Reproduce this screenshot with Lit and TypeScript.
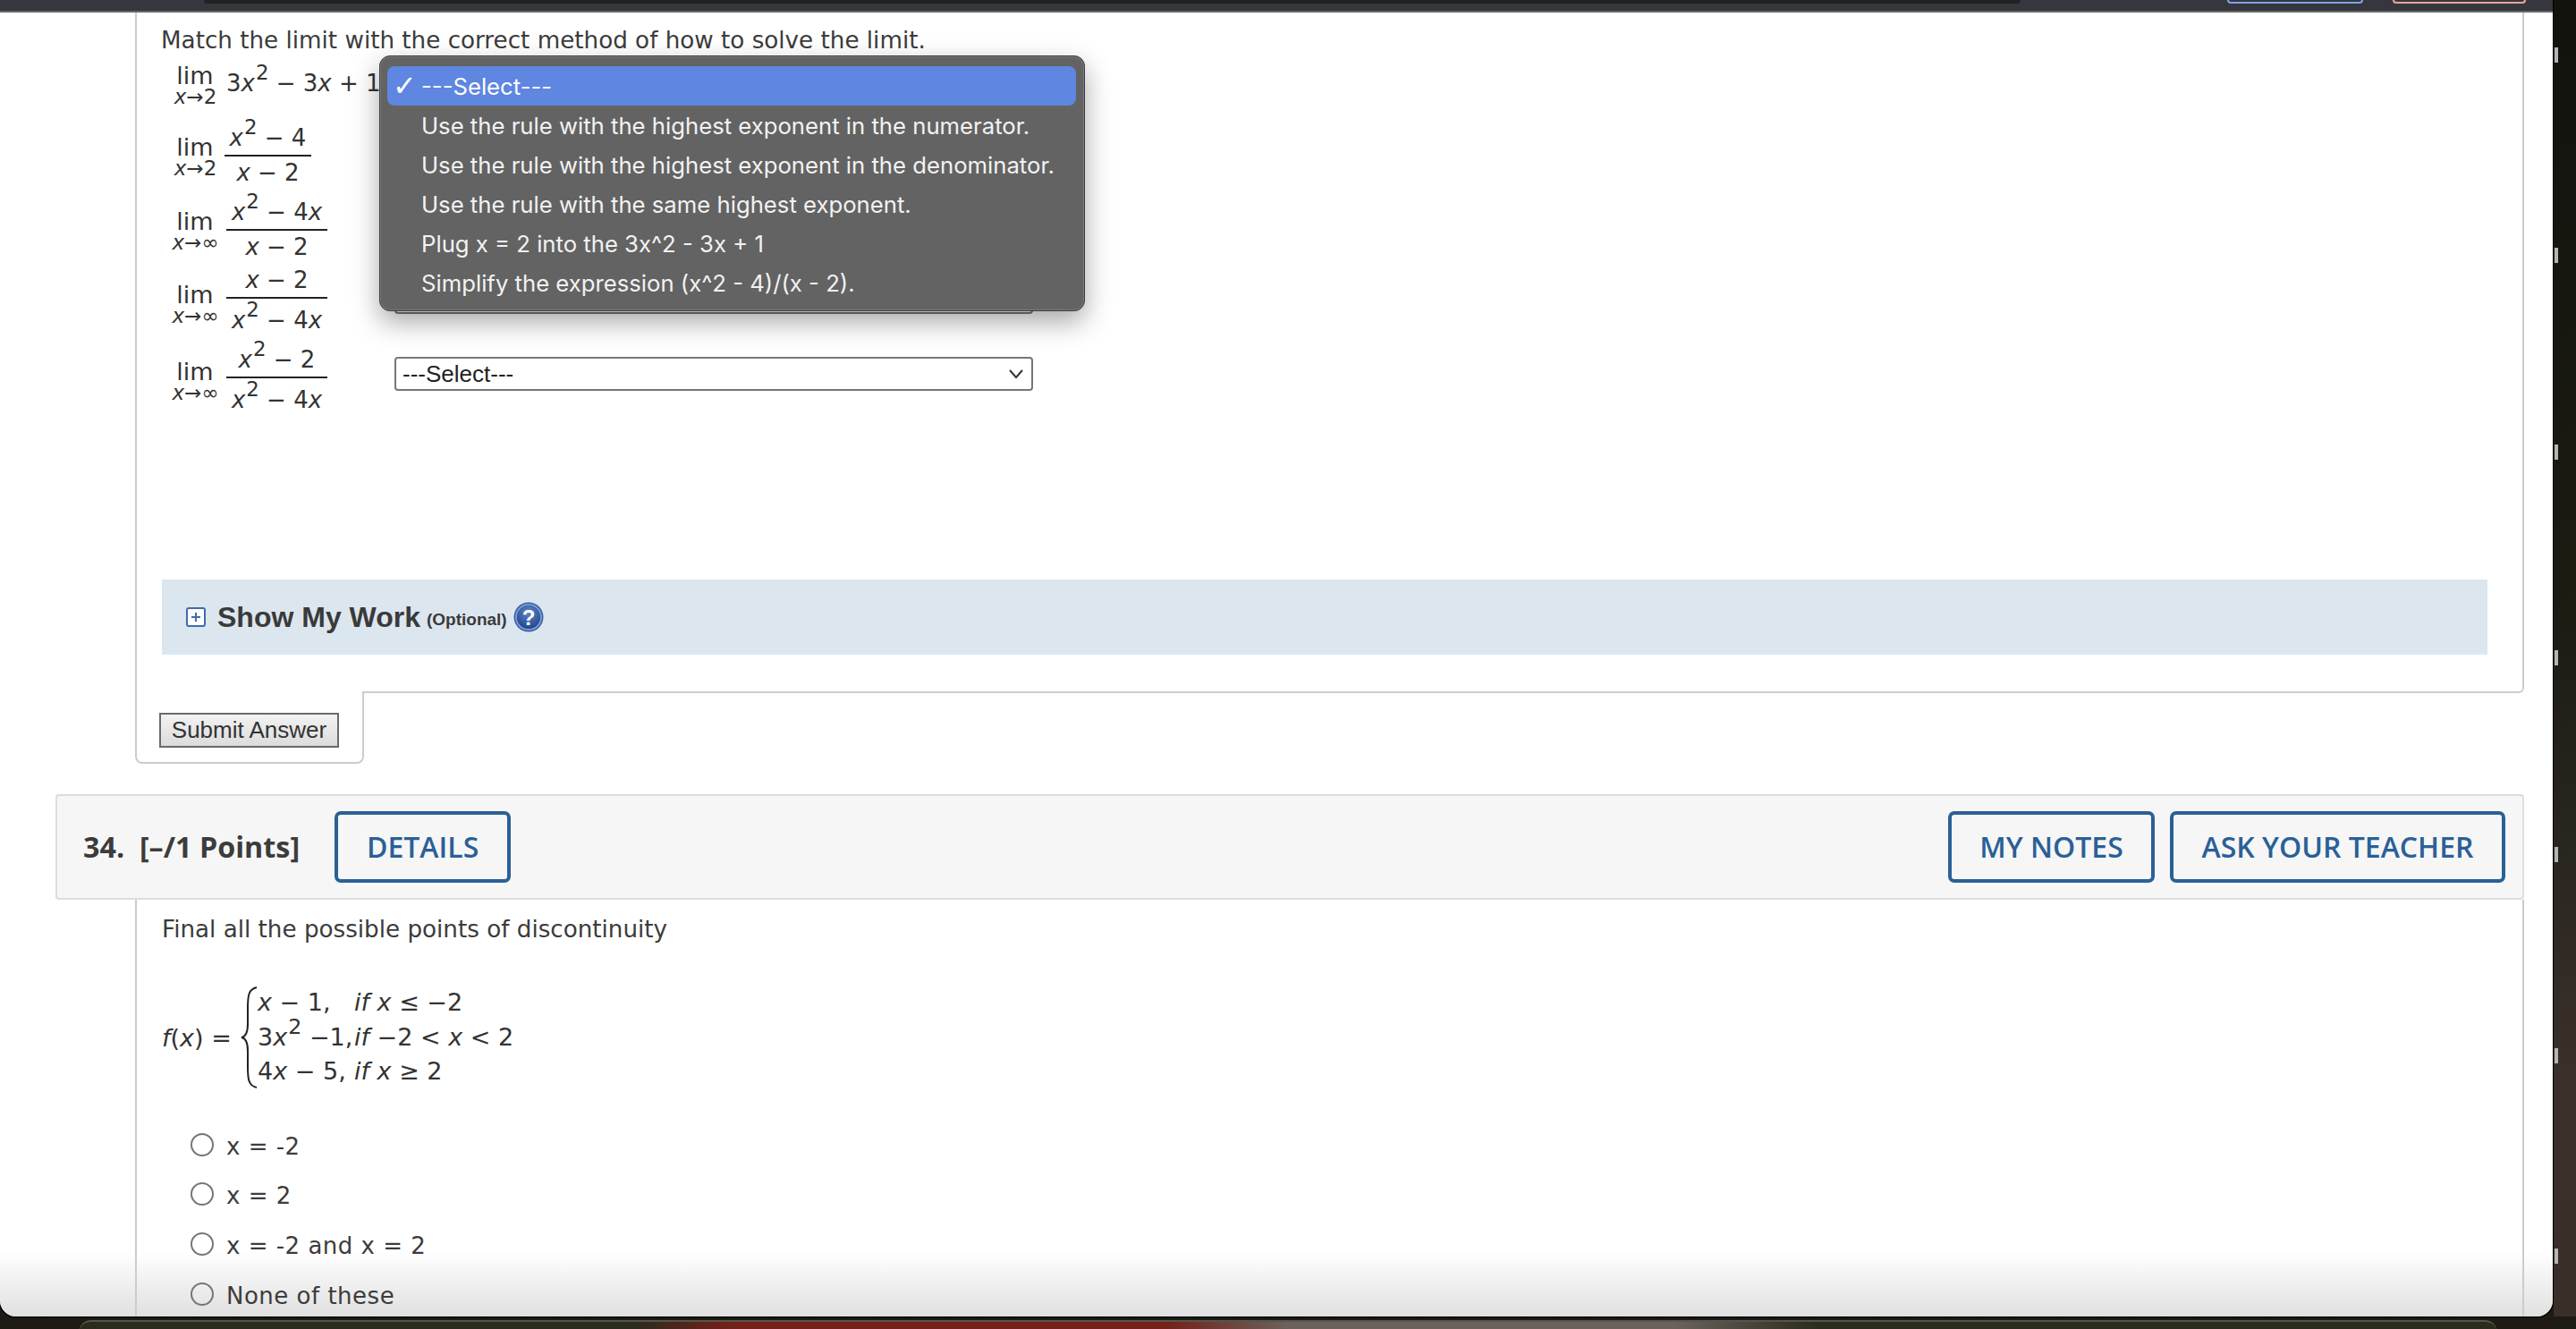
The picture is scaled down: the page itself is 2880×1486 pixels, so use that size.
import { LitElement, html, css, svg } from 'lit';
import { customElement } from 'lit/decorators.js';

const METHODS = [
  'Use the rule with the highest exponent in the numerator.',
  'Use the rule with the highest exponent in the denominator.',
  'Use the rule with the same highest exponent.',
  'Plug x = 2 into the 3x^2 - 3x + 1',
  'Simplify the expression (x^2 - 4)/(x - 2).',
];

const CHOICES = ['x = -2', 'x = 2', 'x = -2 and x = 2', 'None of these'];

const x = html`<i>x</i>`;
const x2 = html`<i>x</i><sup>2</sup>`;

@customElement('app-root')
export class AppRoot extends LitElement {
  static styles = css`
    :host {
      display: block;
      position: relative;
      width: 2880px;
      height: 1486px;
      overflow: hidden;
      background: #1e1a14;
      font-family: 'DejaVu Sans', sans-serif;
      color: #3c3c3c;
    }

    .window {
      width: 2854px;
      height: 1472px;
      display: flex;
      flex-direction: column;
      position: relative;
      overflow: hidden;
      background: #fff;
      border-radius: 0 0 18px 18px;
    }
    .edge {
      position: absolute;
      left: 0;
      top: 0;
      width: 2854px;
      height: 1472px;
      border-radius: 0 0 18px 18px;
      box-shadow: 0 0 0 1.5px #000;
    }
    .fade {
      position: absolute;
      left: 0;
      right: 0;
      bottom: 0;
      height: 72px;
      background: linear-gradient(to bottom, rgba(222, 222, 222, 0), rgba(222, 222, 222, 0.95));
      pointer-events: none;
    }

    .topbar {
      height: 12px;
      flex: none;
      background: #36373c;
      border-bottom: 2px solid #66676a;
      display: flex;
      align-items: flex-start;
      padding: 0 30px 0 228px;
    }
    .tab {
      width: 2031px;
      height: 4px;
      background: #202124;
      border-radius: 0 0 12px 12px;
      margin-right: 231px;
    }
    .pill {
      height: 2px;
      border: 2px solid;
      border-top: none;
      border-radius: 0 0 14px 14px;
      margin-right: 33px;
    }
    .pill.blue { width: 148px; border-color: #7ba3e8; }
    .pill.pink { width: 145px; border-color: #e9a59b; margin-right: 0; }

    .card {
      margin-left: 151px;
      width: 2671px;
      box-sizing: border-box;
      border-left: 2px solid #ccc;
      border-right: 2px solid #ccc;
      padding-left: 27px;
    }
    .q33 {
      height: 761px;
      flex: none;
      box-sizing: border-box;
      position: relative;
      border-bottom: 2px solid #ccc;
      border-radius: 0 0 6px 0;
      padding-top: 16px;
    }
    .prompt {
      font-size: 26.2px;
      line-height: 30px;
      margin: 0;
    }

    .row {
      display: flex;
      align-items: center;
      height: 82px;
    }
    .row1 { height: 50px; margin-top: 6px; }
    .row2 { margin-top: 16px; }
    .row3 { margin-top: 1px; }
    .row4 { margin-top: -6px; }
    .row5 { margin-top: 4px; }

    .math {
      width: 261px;
      flex: none;
      display: flex;
      align-items: center;
      color: #333;
      font-size: 26px;
      white-space: nowrap;
    }
    i { font-style: italic; }
    sup {
      font-size: 0.88em;
      line-height: 0;
      vertical-align: 0.55em;
      margin-left: 1px;
    }

    .lim {
      width: 70px;
      margin-left: 3px;
      flex: none;
      display: flex;
      flex-direction: column;
      align-items: center;
      line-height: 26px;
      font-size: 27px;
    }
    .lim small {
      font-size: 23px;
      line-height: 20px;
      margin-left: 1px;
    }
    .row1 .lim { margin-top: 8px; }
    .row2 .lim, .row3 .lim { margin-top: 4px; }
    .row4 .lim, .row5 .lim { margin-top: 16px; }
    .expr { margin-top: 4px; }

    .frac {
      display: flex;
      flex-direction: column;
      align-items: center;
    }
    .frac > span {
      height: 38px;
      line-height: 38px;
      padding: 0 3px;
    }
    .frac > span:first-child {
      border-bottom: 2px solid #222;
      align-self: stretch;
      text-align: center;
    }
    .frac > span:last-child { margin-top: -1px; }
    .frac.low > span:last-child { margin-top: 5px; }
    .frac.wide { width: 113px; }
    .frac.narrow { width: 97px; margin-left: -2px; }
    .row4 .frac { margin-top: 6px; }
    .row5 .frac { margin-top: 12px; }

    .select {
      width: 714px;
      height: 38px;
      box-sizing: border-box;
      border: 2px solid #767676;
      border-radius: 4px;
      background: #fff;
      color: #222;
      font-family: 'Liberation Sans', Arial, sans-serif;
      font-size: 26px;
      display: flex;
      align-items: center;
      justify-content: space-between;
      padding: 0 8px 0 7px;
    }
    .select svg { width: 18px; height: 12px; }

    .popup {
      position: absolute;
      left: 271px;
      top: 48px;
      width: 789px;
      height: 286px;
      box-sizing: border-box;
      padding: 11px 9px 11px 8px;
      background: #636363;
      border: 1px solid #3c3c3c;
      box-shadow: inset 0 0 0 1px #7a7a7a, 0 12px 30px rgba(0, 0, 0, 0.35);
      border-radius: 12px;
      font-family: Inter, 'Liberation Sans', sans-serif;
      font-size: 25.7px;
      color: #f2f2f2;
      z-index: 2;
    }
    .item {
      height: 44px;
      display: flex;
      align-items: center;
      padding-left: 38px;
      border-radius: 8px;
      position: relative;
      white-space: nowrap;
    }
    .item.on {
      background: #5f86e0;
      color: #fff;
    }
    .item .tick {
      position: absolute;
      left: 6px;
      font-family: 'DejaVu Sans', sans-serif;
      font-size: 32px;
    }

    .work {
      width: 2600px;
      height: 84px;
      margin: 189px 0 0 1px;
      box-sizing: border-box;
      background: #dce6ef;
      display: flex;
      align-items: center;
      padding-left: 27px;
      font-family: 'Liberation Sans', Arial, sans-serif;
      font-weight: 700;
      color: #3a3a3a;
    }
    .work .plus { width: 22px; height: 22px; flex: none; margin-right: 13px; }
    .work b { font-size: 32px; }
    .work em { font-style: normal; font-size: 19px; margin: 6px 7px 0 7px; }
    .work .help { width: 34px; height: 34px; flex: none; }
    .help text {
      font-family: 'Liberation Sans', Arial, sans-serif;
      font-weight: 700;
      font-size: 24px;
      fill: #fff;
    }

    .tabfoot {
      width: 256px;
      height: 81px;
      flex: none;
      box-sizing: border-box;
      margin-left: 151px;
      margin-top: -2px;
      background: #fff;
      border: 2px solid #ccc;
      border-top: none;
      border-radius: 0 0 8px 8px;
      padding: 24px 0 0 25px;
      position: relative;
    }
    .submit {
      width: 201px;
      height: 39px;
      box-sizing: border-box;
      border: 2px solid #6a6a6a;
      background: linear-gradient(to bottom, #f2f2f2, #dcdcdc);
      font-family: 'Liberation Sans', Arial, sans-serif;
      font-size: 26px;
      color: #333;
      padding: 0;
      display: flex;
      align-items: center;
      justify-content: center;
    }

    .qhead {
      margin: 34px 0 0 62px;
      width: 2760px;
      height: 118px;
      flex: none;
      box-sizing: border-box;
      background: #f6f6f6;
      border: 2px solid #ddd;
      border-radius: 4px;
      padding: 0 19px 0 29px;
      display: flex;
      align-items: center;
      font-family: 'Open Sans', sans-serif;
    }
    .qhead .num {
      font-weight: 700;
      font-size: 32.3px;
      color: #3c3c3c;
      white-space: pre;
      margin-right: 39px;
      padding-bottom: 2px;
    }
    .btn {
      height: 80px;
      box-sizing: border-box;
      border: 4px solid #2a6096;
      border-radius: 7px;
      color: #2a6096;
      font-weight: 600;
      font-size: 32px;
      display: flex;
      align-items: center;
      justify-content: center;
      padding-bottom: 2px;
    }
    .btn.details { width: 197px; }
    .btn.notes { width: 231px; margin-left: auto; }
    .btn.ask { width: 375px; margin-left: 17px; }

    .q34 {
      flex: 1;
      padding-top: 18px;
      position: relative;
      z-index: 1;
    }
    .q34 .prompt { padding-left: 1px; }

    .piece {
      display: flex;
      align-items: center;
      margin-top: 49px;
      font-size: 27px;
      color: #333;
      height: 114px;
    }
    .piece .lhs { white-space: nowrap; margin-left: 1px; width: 88px; }
    .piece svg { width: 19px; height: 114px; flex: none; }
    .cases {
      display: grid;
      grid-template-columns: 108px auto;
      line-height: 38.5px;
      white-space: nowrap;
    }

    .choices {
      list-style: none;
      margin: 37px 0 0 33px;
      padding: 0;
    }
    .choices li {
      height: 55.6px;
      display: flex;
      align-items: center;
      font-size: 26px;
      color: #3c3c3c;
      letter-spacing: 0.5px;
    }
    .radio {
      width: 26px;
      height: 26px;
      box-sizing: border-box;
      border: 2px solid #767676;
      border-radius: 50%;
      margin-right: 14px;
      margin-top: -4px;
    }

    .strip {
      position: absolute;
      left: 2855px;
      top: 0;
      width: 25px;
      height: 1472px;
      background: linear-gradient(to bottom, #12130d, #1b1b12 45%, #2a2620 65%, #3b302a 82%, #3a2e28);
      overflow: hidden;
    }
    .strip span {
      position: absolute;
      left: 1px;
      width: 4px;
      height: 17px;
      background: #b5b5b5;
    }

    .dock {
      position: absolute;
      left: 88px;
      top: 1476px;
      width: 2704px;
      height: 14px;
      border-radius: 14px 14px 0 0;
      border-top: 2px solid #55564a;
      background: linear-gradient(to right, #2b2b1e 0, #2b2b1e 23%, #74211b 27%, #74211b 45%, #6b625c 50%, #6b625c 66%, #2b2b1e 72%, #2b2b1e 100%);
    }
  `;

  private renderLim(sub: unknown) {
    return html`<span class="lim">lim<small>${x}→${sub}</small></span>`;
  }

  private renderSelect() {
    return html`<div class="select">
      <span>---Select---</span>
      <svg viewBox="0 0 18 12"><path d="M2 2l7 8 7-8" fill="none" stroke="#333" stroke-width="2"/></svg>
    </div>`;
  }

  private renderPlus() {
    return svg`<svg class="plus" viewBox="0 0 22 22">
      <rect x="1" y="1" width="20" height="20" rx="2" fill="#fff" stroke="#3f6cab" stroke-width="2"/>
      <path d="M11 6v10M6 11h10" stroke="#3f6cab" stroke-width="2"/>
    </svg>`;
  }

  private renderHelp() {
    return svg`<svg class="help" viewBox="0 0 34 34">
      <defs>
        <radialGradient id="hg" cx="50%" cy="30%" r="70%">
          <stop offset="0" stop-color="#5f86c6"/>
          <stop offset="1" stop-color="#23468f"/>
        </radialGradient>
      </defs>
      <circle cx="17" cy="17" r="16.5" fill="#3c62a8"/>
      <circle cx="17" cy="17" r="14" fill="none" stroke="#86a5d6" stroke-width="1.5"/>
      <circle cx="17" cy="17" r="13" fill="url(#hg)"/>
      <text x="17" y="26" text-anchor="middle">?</text>
    </svg>`;
  }

  render() {
    return html`
      <div class="edge"></div>
      <div class="window">
        <div class="topbar">
          <div class="tab"></div>
          <div class="pill blue"></div>
          <div class="pill pink"></div>
        </div>

        <section class="card q33">
          <p class="prompt">Match the limit with the correct method of how to solve the limit.</p>

          <div class="row row1">
            <div class="math">${this.renderLim('2')}<span class="expr">3${x2} − 3${x} + 1</span></div>
            ${this.renderSelect()}
          </div>
          <div class="row row2">
            <div class="math">${this.renderLim('2')}
              <span class="frac narrow"><span>${x2} − 4</span><span>${x} − 2</span></span>
            </div>
            ${this.renderSelect()}
          </div>
          <div class="row row3">
            <div class="math">${this.renderLim('∞')}
              <span class="frac wide"><span>${x2} − 4${x}</span><span>${x} − 2</span></span>
            </div>
            ${this.renderSelect()}
          </div>
          <div class="row row4">
            <div class="math">${this.renderLim('∞')}
              <span class="frac wide low"><span>${x} − 2</span><span>${x2} − 4${x}</span></span>
            </div>
            ${this.renderSelect()}
          </div>
          <div class="row row5">
            <div class="math">${this.renderLim('∞')}
              <span class="frac wide low"><span>${x2} − 2</span><span>${x2} − 4${x}</span></span>
            </div>
            ${this.renderSelect()}
          </div>

          <div class="popup">
            <div class="item on"><span class="tick">✓</span>---Select---</div>
            ${METHODS.map((m) => html`<div class="item">${m}</div>`)}
          </div>

          <div class="work">
            ${this.renderPlus()}
            <b>Show My Work</b><em>(Optional)</em>
            ${this.renderHelp()}
          </div>
        </section>

        <div class="tabfoot"><div class="submit">Submit Answer</div></div>

        <div class="qhead">
          <span class="num">34.  [–/1 Points]</span>
          <div class="btn details">DETAILS</div>
          <div class="btn notes">MY NOTES</div>
          <div class="btn ask">ASK YOUR TEACHER</div>
        </div>

        <section class="card q34">
          <p class="prompt">Final all the possible points of discontinuity</p>
          <div class="piece">
            <span class="lhs"><i>f</i>(${x}) =</span>
            <svg viewBox="0 0 19 114">
              <path d="M18 1C9 3 8 10 8 24v18c0 9-2 14-7 15 5 1 7 6 7 15v18c0 14 1 21 10 23" fill="none" stroke="#222" stroke-width="2"/>
            </svg>
            <div class="cases">
              <span>${x} − 1,</span><span><i>if x</i> ≤ −2</span>
              <span>3${x2} −1,</span><span><i>if</i> −2 &lt; ${x} &lt; 2</span>
              <span>4${x} − 5,</span><span><i>if x</i> ≥ 2</span>
            </div>
          </div>
          <ul class="choices">
            ${CHOICES.map((c) => html`<li><span class="radio"></span>${c}</li>`)}
          </ul>
        </section>

        <div class="fade"></div>
      </div>

      <div class="strip">
        ${[53, 277, 497, 727, 947, 1172, 1396].map(
          (t) => html`<span style="top:${t}px"></span>`,
        )}
      </div>
      <div class="dock"></div>
    `;
  }
}

declare global {
  interface HTMLElementTagNameMap {
    'app-root': AppRoot;
  }
}
